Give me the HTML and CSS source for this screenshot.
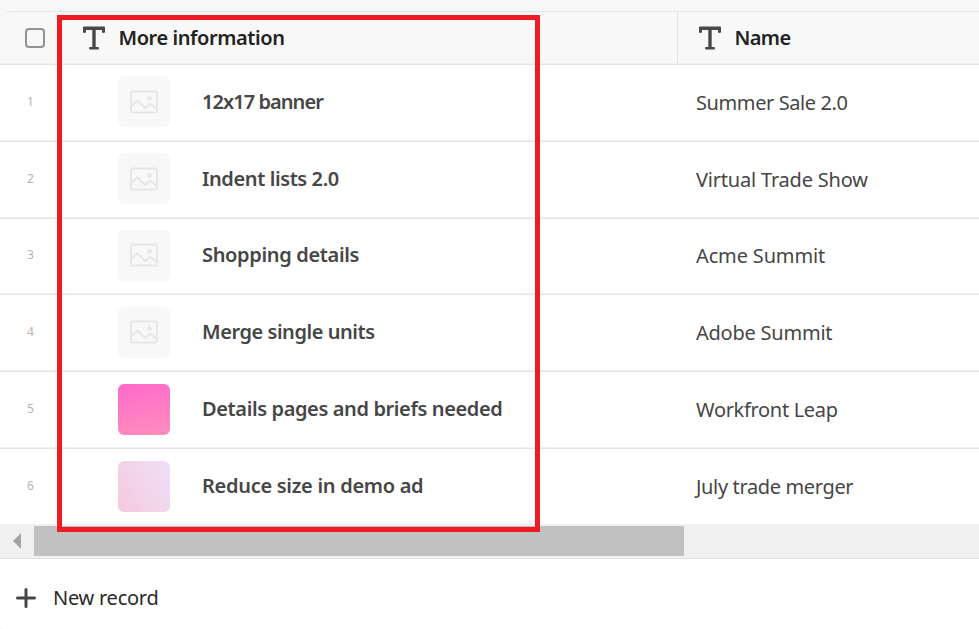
FILE: index.html
```
<!DOCTYPE html>
<html lang="en">
<head>
<meta charset="utf-8">
<title>Records</title>
<link rel="stylesheet" href="styles.css">
</head>
<body>
<svg class="defs" aria-hidden="true">
  <symbol id="type" viewBox="0 0 24 24"><path d="M2 .5h20q1 0 1 1V6q0 1-1.500 1T20 6V4h-6.300v17H16q1 0 1 1.300T16 23.500H8q-1 0-1-1.200T8 21h2.300V4H4v2q0 1-1.500 1T1 6V1.500q0-1 1-1z"/></symbol>
  <symbol id="image" viewBox="0 0 30 24"><rect x="2" y="1.500" width="26" height="21" rx="2"/><path d="M2.500 16l4.800-4.700q1-.9 2 0l6.200 6.200q.8.700 1.600 0l2.900-2.900q1.100-1 2.200 0l5.500 4.600"/><circle cx="20.500" cy="8.300" r="1.400"/></symbol>
</svg>
<main class="table">
  <header class="head">
    <div class="num"><span class="check"></span></div>
    <div class="title"><svg class="type"><use href="#type"/></svg><span class="h1">More information</span></div>
    <div class="name"><svg class="type"><use href="#type"/></svg><span class="h2">Name</span></div>
  </header>
  <section class="rows">
    <div class="row"><div class="num">1</div><div class="title"><span class="thumb"><svg><use href="#image"/></svg></span><b class="t1">12x17 banner</b></div><div class="name"><span class="n1">Summer Sale 2.0</span></div></div>
    <div class="row"><div class="num">2</div><div class="title"><span class="thumb"><svg><use href="#image"/></svg></span><b class="t2">Indent lists 2.0</b></div><div class="name"><span class="n2">Virtual Trade Show</span></div></div>
    <div class="row"><div class="num">3</div><div class="title"><span class="thumb"><svg><use href="#image"/></svg></span><b class="t3">Shopping details</b></div><div class="name"><span class="n3">Acme Summit</span></div></div>
    <div class="row"><div class="num">4</div><div class="title"><span class="thumb"><svg><use href="#image"/></svg></span><b class="t4">Merge single units</b></div><div class="name"><span class="n4">Adobe Summit</span></div></div>
    <div class="row"><div class="num">5</div><div class="title"><span class="thumb pink"></span><b class="t5">Details pages and briefs needed</b></div><div class="name"><span class="n5">Workfront Leap</span></div></div>
    <div class="row"><div class="num">6</div><div class="title"><span class="thumb pale"></span><b class="t6">Reduce size in demo ad</b></div><div class="name"><span class="n6">July trade merger</span></div></div>
  </section>
  <div class="scroll"><svg class="arrow" viewBox="0 0 8 16"><path d="M8 0v16L0 8z"/></svg><div class="handle"></div></div>
  <footer class="foot"><svg class="plus" viewBox="0 0 20 20"><path d="M10 1.500v17M1.500 10h17"/></svg><span class="new">New record</span></footer>
</main>
<div class="highlight"></div>
</body>
</html>
```

FILE: styles.css
```
* { box-sizing: border-box; }
body {
  margin: 0;
  height: 629px;
  padding-top: 11px;
  overflow: hidden;
  background: #f8f8f8;
  color: #464646;
  font: 20px/26px "Noto Sans", "Open Sans", sans-serif;
  white-space: nowrap;
}
.defs { position: absolute; width: 0; height: 0; }
.table {
  height: 618px;
  width: 991px;
  border-top: 1px solid #e5e5e5;
  border-radius: 12px 0 0 4px;
  background: #fff;
  overflow: hidden;
}
.head, .row { display: grid; grid-template-columns: 61px 616px 1fr; }
.head {
  height: 53px;
  background: #f8f8f8;
  border-bottom: 1px solid #e3e3e3;
  box-shadow: inset 0 -1px #f0f0f0;
  color: #222;
  font-weight: 600;
}
.head > div { display: flex; align-items: center; }
.head .num { border-right: 1px solid #e6e6e6; width: 62px; }
.head .title { padding-left: 21px; }
.head .name { border-left: 1px solid #e3e3e3; padding-left: 20px; }
.check { width: 20px; height: 20px; margin-left: 25px; border: 2px solid #929292; border-radius: 4px; background: #f8f8f8; }
.type { width: 24px; height: 24px; margin-right: 12.5px; fill: #494949; }
.rows { height: 459px; display: flex; flex-direction: column; }
.row {
  flex: 0 0 76.8px;
  border-bottom: 1px solid #e4e4e4;
  box-shadow: inset 0 -1px #f1f1f1;
}
.row:last-child { border: 0; box-shadow: none; }
.row > div { display: flex; align-items: center; padding-bottom: 2px; }
.row .num { padding-left: 27px; color: #b4b4b4; font-size: 12px; }
.row .title { padding-left: 57px; }
.row .name { padding: 0 0 0 19px; }
.row b { font-weight: 600; }
.thumb {
  width: 52px;
  height: 51px;
  margin-right: 32px;
  border-radius: 6px;
  background: #f8f8f8;
  display: grid;
  place-items: center;
}
.thumb svg { width: 30px; height: 24px; fill: none; stroke: #e6e6e6; stroke-width: 2; }
.pink { background: linear-gradient(170deg, #ff6bcb, #ff8dbd); }
.pale { background: linear-gradient(60deg, #f6c9dd, #eee0f7); }
.scroll { height: 35px; display: flex; align-items: center; background: #f0f0f0; border-bottom: 1px solid #e4e4e4; }
.arrow { width: 8px; height: 16px; margin: 0 13px; fill: #a3a3a3; }
.handle { width: 650px; height: 30px; background: #c1c1c1; }
.foot { height: 77px; display: flex; align-items: center; padding-left: 16px; color: #292929; }
.plus { width: 20px; height: 20px; margin-right: 17px; fill: none; stroke: #464646; stroke-width: 3; stroke-linecap: round; }
.highlight { position: absolute; left: 57px; top: 15px; width: 483px; height: 517px; border: 5px solid #ed1c24; }

/* Per-label tracking */
.h1 { letter-spacing: -.42px; }
.h2 { letter-spacing: -.6px; }
.t1 { letter-spacing: -.95px; }
.t2 { letter-spacing: -.4px; }
.t3 { letter-spacing: -.34px; }
.t4 { letter-spacing: -.45px; }
.t5 { letter-spacing: -.38px; }
.t6 { letter-spacing: -.29px; }
.n1 { letter-spacing: -.4px; }
.n2 { letter-spacing: -.2px; }
.n3 { letter-spacing: -.15px; }
.n4 { letter-spacing: -.23px; }
.n5 { letter-spacing: -.32px; }
.n6 { letter-spacing: -.36px; }
.new { letter-spacing: -.25px; }
```
